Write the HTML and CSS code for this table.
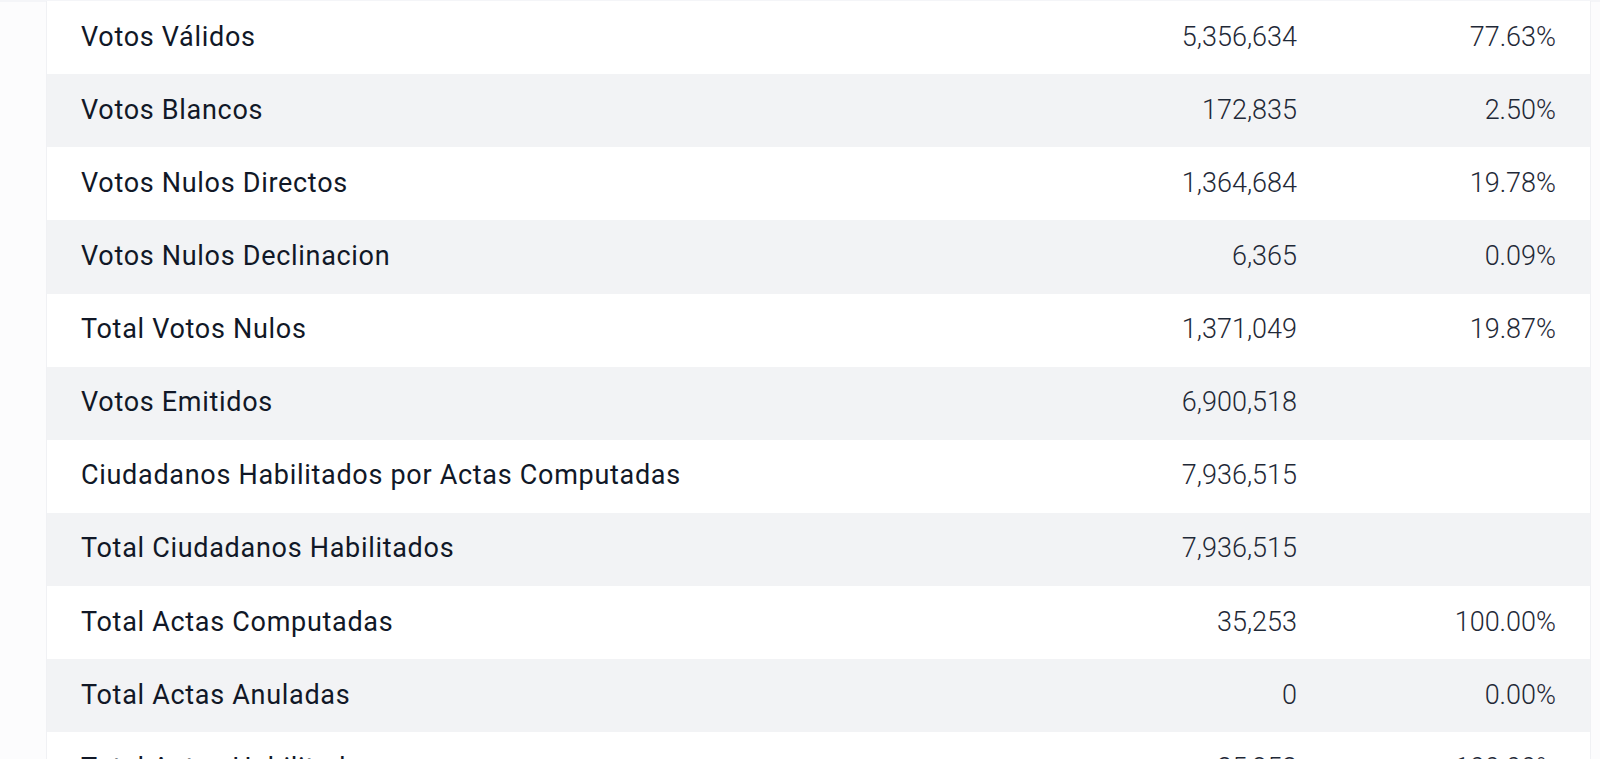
FILE: index.html
```html
<!DOCTYPE html>
<html lang="es">
<head>
<meta charset="utf-8">
<title>Resultados</title>
<link rel="stylesheet" href="styles.css">
</head>
<body>
<main class="page">
  <div class="table">
    <div class="row"><span class="label">Votos Válidos</span><span class="num">5,356,634</span><span class="pct">77.63%</span></div>
    <div class="row alt"><span class="label">Votos Blancos</span><span class="num">172,835</span><span class="pct">2.50%</span></div>
    <div class="row"><span class="label">Votos Nulos Directos</span><span class="num">1,364,684</span><span class="pct">19.78%</span></div>
    <div class="row alt"><span class="label">Votos Nulos Declinacion</span><span class="num">6,365</span><span class="pct">0.09%</span></div>
    <div class="row"><span class="label">Total Votos Nulos</span><span class="num">1,371,049</span><span class="pct">19.87%</span></div>
    <div class="row alt"><span class="label">Votos Emitidos</span><span class="num">6,900,518</span><span class="pct"></span></div>
    <div class="row"><span class="label">Ciudadanos Habilitados por Actas Computadas</span><span class="num">7,936,515</span><span class="pct"></span></div>
    <div class="row alt"><span class="label">Total Ciudadanos Habilitados</span><span class="num">7,936,515</span><span class="pct"></span></div>
    <div class="row"><span class="label">Total Actas Computadas</span><span class="num">35,253</span><span class="pct">100.00%</span></div>
    <div class="row alt"><span class="label">Total Actas Anuladas</span><span class="num">0</span><span class="pct">0.00%</span></div>
    <div class="row"><span class="label">Total Actas Habilitadas</span><span class="num">35,253</span><span class="pct">100.00%</span></div>
  </div>
</main>
</body>
</html>
```
FILE: styles.css
```css
html, body {
  margin: 0;
  padding: 0;
  background: #fcfcfd;
  height: 759px;
  overflow: hidden;
}
.page {
  padding: 1px 9px 0 46px;
  font-family: Roboto, "Liberation Sans", sans-serif;
  border-top: 2px solid #f4f5f8;
}
.table {
  background: #ffffff;
  border-left: 1px solid #f0f1f4;
  border-right: 1px solid #f0f1f4;
  margin-top: -2px;
}
.row {
  display: grid;
  grid-template-columns: 1fr 300px 259px;
  align-items: center;
  height: 73.125px;
  box-sizing: border-box;
  padding: 0 34px 2px 34px;
  background: #ffffff;
}
.row.alt {
  background: #f2f3f5;
}
.label {
  font-size: 27px;
  font-weight: 400;
  letter-spacing: 0.7px;
  color: #111827;
  white-space: nowrap;
}
.num, .pct {
  font-size: 27px;
  font-weight: 300;
  color: #1f2937;
  text-align: right;
  white-space: nowrap;
}
```
